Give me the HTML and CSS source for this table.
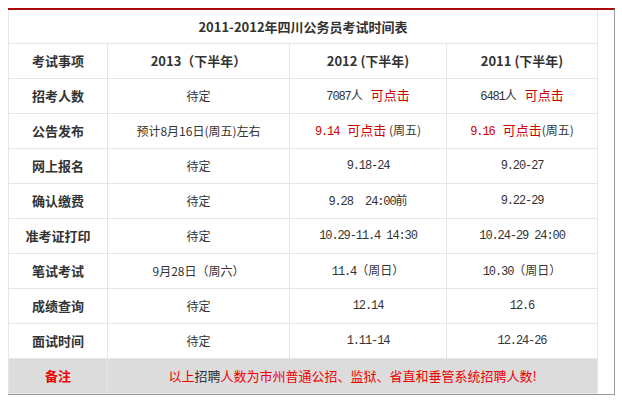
FILE: index.html
```html
<!DOCTYPE html>
<html lang="zh-CN">
<head>
<meta charset="utf-8">
<title>2011-2012年四川公务员考试时间表</title>
<link rel="stylesheet" href="styles.css">
</head>
<body>
<div class="wrap">
  <table class="sched">
    <colgroup>
      <col class="c0"><col class="c1"><col class="c2"><col class="c3">
    </colgroup>
    <tr class="title"><th colspan="4">2011-2012年四川公务员考试时间表</th></tr>
    <tr class="head">
      <th>考试事项</th>
      <th>2013（下半年）</th>
      <th>2012 (下半年)</th>
      <th>2011 (下半年)</th>
    </tr>
    <tr>
      <th>招考人数</th>
      <td>待定</td>
      <td><span class="num">7087</span>人<a class="red gap">可点击</a></td>
      <td><span class="num">6481</span>人<a class="red gap">可点击</a></td>
    </tr>
    <tr>
      <th>公告发布</th>
      <td>预计8月16日(周五)左右</td>
      <td><a class="red"><span class="num">9.14</span><span class="gap">可点击</span></a> (周五)</td>
      <td><a class="red"><span class="num">9.16</span><span class="gap">可点击</span></a>(周五)</td>
    </tr>
    <tr>
      <th>网上报名</th>
      <td>待定</td>
      <td class="num">9.18-24</td>
      <td class="num">9.20-27</td>
    </tr>
    <tr>
      <th>确认缴费</th>
      <td>待定</td>
      <td><span class="num">9.28&nbsp;&nbsp;24:00</span>前</td>
      <td class="num">9.22-29</td>
    </tr>
    <tr>
      <th>准考证打印</th>
      <td>待定</td>
      <td class="num">10.29-11.4 14:30</td>
      <td class="num">10.24-29 24:00</td>
    </tr>
    <tr>
      <th>笔试考试</th>
      <td>9月28日（周六）</td>
      <td><span class="num">11.4</span>（周日）</td>
      <td><span class="num">10.30</span>（周日）</td>
    </tr>
    <tr>
      <th>成绩查询</th>
      <td>待定</td>
      <td class="num">12.14</td>
      <td class="num">12.6</td>
    </tr>
    <tr>
      <th>面试时间</th>
      <td>待定</td>
      <td class="num">1.11-14</td>
      <td class="num">12.24-26</td>
    </tr>
    <tr class="note">
      <th>备注</th>
      <td colspan="3"><span class="hl">以上</span>招聘<span class="hl">人数为市州普通公招、监狱、省直和垂管系统招聘人数!</span></td>
    </tr>
  </table>
</div>
</body>
</html>
```
FILE: styles.css
```css
html, body {
  margin: 0;
  padding: 0;
  background: #fff;
}
body {
  padding: 8px;
  font-family: "Noto Sans CJK SC", "Liberation Sans", sans-serif;
  font-size: 12px;
  color: #333;
}
.wrap {
  width: 606px;
  border-top: 2px solid #a80a0a;
  border-right: 1px solid #999;
  border-bottom: 1px solid #999;
}
.sched {
  width: 589px;
  table-layout: fixed;
  border-collapse: collapse;
  border-top: 0;
}
.c0 { width: 99px; }
.c1 { width: 182px; }
.c2 { width: 157px; }
.c3 { width: 151px; }
.sched th,
.sched td {
  border: 1px solid #e6e6e6;
  padding: 0;
  height: 34px;
  text-align: center;
  vertical-align: middle;
  line-height: 16px;
  white-space: nowrap;
}
.sched tr.title th {
  border-top: 0;
  height: 33px;
}
.sched th {
  font-weight: bold;
  font-size: 13px;
  color: #333;
}
.red {
  color: #c00;
  font-size: 13px;
}
.gap {
  margin-left: 8px;
}
.num {
  font-family: "Liberation Mono", monospace;
  font-size: 12px;
  letter-spacing: -1.1px;
}
.note th,
.note td {
  background: #dcdcdc;
}
.note th {
  color: #e00;
}
.note td {
  color: #333;
  font-size: 13px;
}
.note .hl {
  color: #e00;
}
```
